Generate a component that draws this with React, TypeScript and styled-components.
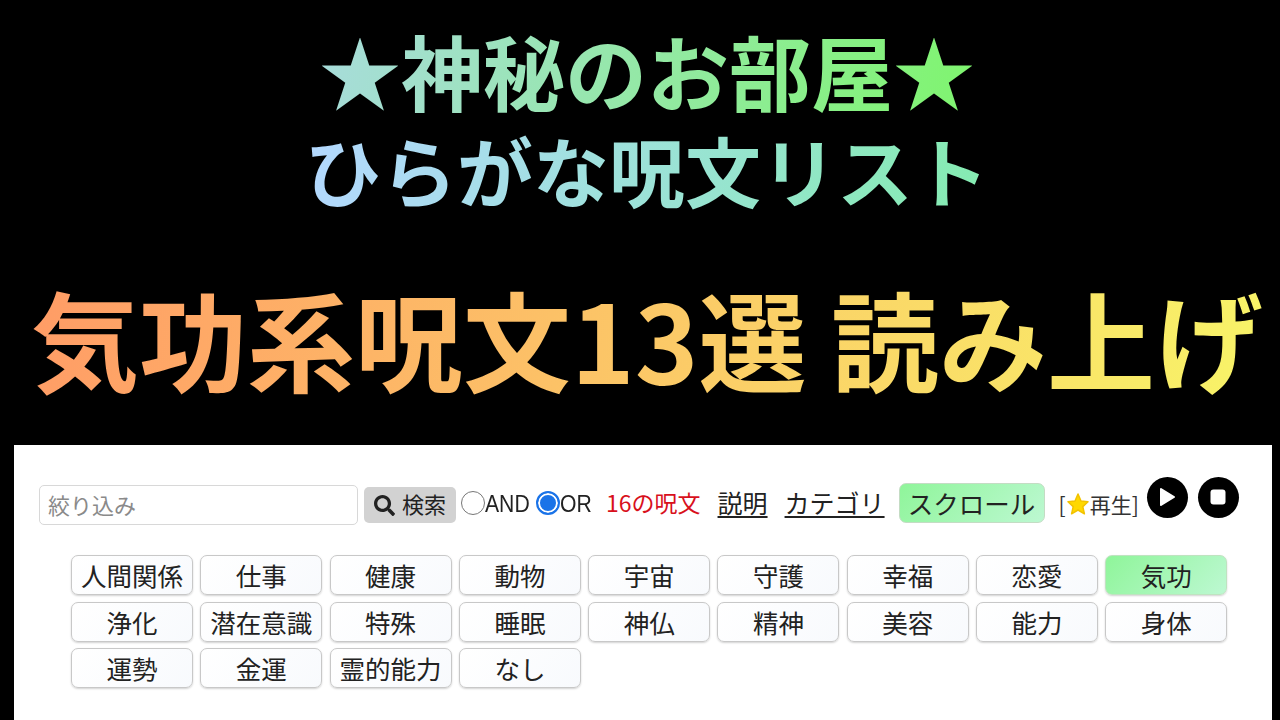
import React from 'react'
import styled, { createGlobalStyle } from 'styled-components'
import { FaSearch } from 'react-icons/fa'

const GlobalStyle = createGlobalStyle`
  html, body {
    margin: 0;
    padding: 0;
    background: #000;
  }
  body {
    font-family: "Noto Sans CJK JP", "Noto Sans", sans-serif;
    width: 1280px;
    height: 720px;
    overflow: hidden;
  }
`

const Page = styled.div`
  width: 1280px;
  height: 720px;
  background: #000;
  display: flex;
  flex-direction: column;
`

const Header = styled.header`
  height: 445px;
  padding-left: 14px;
  box-sizing: border-box;
  display: flex;
  flex-direction: column;
  align-items: center;
`

const TitleLine = styled.h1<{ $size: number; $top: number; $grad: string }>`
  margin: ${(p) => p.$top}px 0 0;
  font-size: ${(p) => p.$size}px;
  line-height: 1.2;
  font-weight: 700;
  white-space: nowrap;
  background: ${(p) => p.$grad};
  -webkit-background-clip: text;
  background-clip: text;
  color: transparent;
`

const Panel = styled.main`
  flex: 1;
  margin: 0 8px 0 14px;
  background: #fff;
  padding: 40px 0 0 25px;
`

const Toolbar = styled.div`
  display: flex;
  align-items: center;
  height: 40px;
`

const FilterInput = styled.input`
  width: 319px;
  height: 40px;
  box-sizing: border-box;
  border: 1px solid #d8d8d8;
  border-radius: 5px;
  padding: 0 8px 3px;
  font: 22px "Noto Sans CJK JP", sans-serif;
  color: #333;
  &::placeholder {
    color: #8a8a8a;
  }
`

const SearchButton = styled.button`
  margin-left: 6px;
  width: 92px;
  height: 36px;
  border: none;
  border-radius: 5px;
  background: #d2d2d2;
  color: #222;
  display: flex;
  align-items: center;
  justify-content: center;
  gap: 7px;
  padding: 0 0 5px;
  font: 22px "Noto Sans CJK JP", sans-serif;
  svg {
    margin-top: 5px;
  }
`

const RadioLabel = styled.label<{ $gap: number; $width: number }>`
  margin-left: ${(p) => p.$gap}px;
  width: ${(p) => p.$width}px;
  display: flex;
  align-items: center;
  color: #222;
`

const RadioText = styled.span`
  font: 23px/1 "Liberation Sans", sans-serif;
  transform: scaleX(0.92);
  transform-origin: left center;
  margin-bottom: 2px;
`

const RadioDot = styled.span<{ $on?: boolean }>`
  flex: none;
  width: 24px;
  height: 24px;
  box-sizing: border-box;
  border-radius: 50%;
  border: ${(p) => (p.$on ? '2px solid #1a73e8' : '1.5px solid #777')};
  background: ${(p) => (p.$on ? '#1a73e8' : '#fff')};
  box-shadow: ${(p) => (p.$on ? 'inset 0 0 0 2px #fff' : 'none')};
  margin-top: -4px;
`

const Count = styled.span`
  margin: 0 0 6px 16px;
  color: #d8101c;
  font-size: 23px;
  white-space: nowrap;
`

const TextLink = styled.a`
  margin: 0 0 6px 17px;
  color: #222;
  font-size: 25px;
  text-decoration: underline;
  text-underline-offset: 3px;
  white-space: nowrap;
`

const ScrollToggle = styled.button`
  margin: -4px 0 0 14px;
  width: 146px;
  height: 40px;
  padding: 0 0 5px;
  border: 1px solid #c4dcc4;
  border-radius: 7px;
  background: linear-gradient(135deg, #8ff59a, #bdf8d2);
  color: #222;
  font: 25.500px "Noto Sans CJK JP", sans-serif;
  white-space: nowrap;
`

const PlayLabel = styled.span`
  margin: 0 0 2px 14px;
  display: flex;
  align-items: center;
  font-size: 21px;
  color: #333;
  white-space: nowrap;
`

const RoundButton = styled.span<{ $gap: number }>`
  margin-left: ${(p) => p.$gap}px;
  width: 41px;
  height: 41px;
  border-radius: 50%;
  background: #000;
  display: flex;
  align-items: center;
  justify-content: center;
  margin-top: -16px;
`

const CategoryGrid = styled.div`
  margin: 30px 0 0 32px;
  display: grid;
  grid-template-columns: repeat(9, 122px);
  grid-auto-rows: 40px;
  column-gap: 7.300px;
  row-gap: 6.600px;
`

const Category = styled.button<{ $on?: boolean }>`
  padding: 0 0 7px;
  border: 1px solid ${(p) => (p.$on ? '#bfe3c0' : '#c8c8c8')};
  border-radius: 7px;
  background: ${(p) =>
    p.$on ? 'linear-gradient(135deg, #8ff59a, #bdf8d2)' : 'linear-gradient(135deg, #fff, #f8fafd)'};
  box-shadow: 0 1px 2px rgba(0, 0, 0, 0.18);
  color: #222;
  font: 25.500px "Noto Sans CJK JP", sans-serif;
  white-space: nowrap;
`

const categories = [
  '人間関係', '仕事', '健康', '動物', '宇宙', '守護', '幸福', '恋愛', '気功',
  '浄化', '潜在意識', '特殊', '睡眠', '神仏', '精神', '美容', '能力', '身体',
  '運勢', '金運', '霊的能力', 'なし',
]

export default function App() {
  return (
    <Page>
      <GlobalStyle />
      <Header>
        <TitleLine $size={82} $top={21} $grad="linear-gradient(100deg, #a8dcdc, #7ff56e)">★神秘のお部屋★</TitleLine>
        <TitleLine $size={76} $top={5} $grad="linear-gradient(100deg, #b4d8ff, #84ecb0)">ひらがな呪文リスト</TitleLine>
        <TitleLine $size={108} $top={57} $grad="linear-gradient(100deg, #ff9c66, #f8f468)">気功系呪文13選 読み上げ</TitleLine>
      </Header>
      <Panel>
        <Toolbar>
          <FilterInput placeholder="絞り込み" readOnly />
          <SearchButton>
            <FaSearch size={21} />
            検索
          </SearchButton>
          <RadioLabel $gap={5} $width={69}><RadioDot /><RadioText>AND</RadioText></RadioLabel>
          <RadioLabel $gap={6} $width={54}><RadioDot $on /><RadioText>OR</RadioText></RadioLabel>
          <Count>16の呪文</Count>
          <TextLink>説明</TextLink>
          <TextLink>カテゴリ</TextLink>
          <ScrollToggle>スクロール</ScrollToggle>
          <PlayLabel>
            [
            <svg width="24" height="24" viewBox="0 0 24 24">
              <path d="M12 2l3 7 7 .8-5.2 4.8 1.6 7.2L12 18l-6.400 3.800 1.600-7.200L2 9.800 9 9z" fill="#ffd800" stroke="#f2c200" strokeLinejoin="round" strokeWidth="1.500" />
            </svg>
            再生]
          </PlayLabel>
          <RoundButton $gap={8}>
            <svg width="18" height="20" viewBox="0 0 18 20">
              <path d="M3 2l13 8-13 8z" fill="#fff" stroke="#fff" strokeWidth="2" strokeLinejoin="round" />
            </svg>
          </RoundButton>
          <RoundButton $gap={10}>
            <svg width="18" height="18" viewBox="0 0 18 18">
              <rect x="1.500" y="1.500" width="15" height="15" rx="3" fill="#fff" />
            </svg>
          </RoundButton>
        </Toolbar>
        <CategoryGrid>
          {categories.map((c) => (
            <Category key={c} $on={c === '気功'}>{c}</Category>
          ))}
        </CategoryGrid>
      </Panel>
    </Page>
  )
}
